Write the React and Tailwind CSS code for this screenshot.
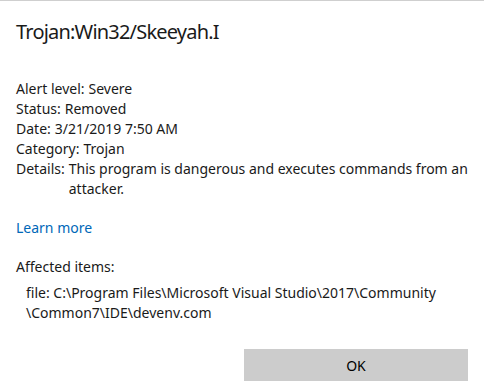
import React from "react";

const rows = [
  ["Alert level:", "Severe"],
  ["Status:", "Removed"],
  ["Date:", "3/21/2019 7:50 AM"],
  ["Category:", "Trojan"],
  ["Details:", "This program is dangerous and executes commands from an attacker."],
];

export default function App() {
  return (
    <div
      className="w-[484px] h-[389px] bg-white border-t border-[#cfcfcf] text-[#1a1a1a] flex flex-col"
      style={{ fontFamily: '"Noto Sans", "Open Sans", sans-serif' }}
    >
      <h1 className="ml-4 mt-[17px] text-[20px] leading-[28px] tracking-[-0.8px]">Trojan:Win32/Skeeyah.I</h1>

      <div className="mt-[33px] ml-4 mr-3 text-[14px] leading-[20px]">
        {rows.map(([label, value]) => (
          <div key={label} className="flex">
            <span className="shrink-0 mr-1">{label}</span>
            <span>{value}</span>
          </div>
        ))}
      </div>

      <a href="#" className="ml-4 mt-[19px] text-[14px] leading-[20px] text-[#0067b8] w-fit">
        Learn more
      </a>

      <div className="ml-4 mt-[19px] text-[14px] leading-[20px]">Affected items:</div>
      <div className="ml-[26px] mt-[6px] mr-4 text-[14px] leading-[20px]">
        file: C:\Program Files\Microsoft Visual Studio\2017\Community
        <br />
        \Common7\IDE\devenv.com
      </div>

      <div className="flex justify-end mt-[26px] pr-4">
        <button className="w-[224px] h-[32px] bg-[#cccccc] text-[14px] text-black">OK</button>
      </div>
    </div>
  );
}
